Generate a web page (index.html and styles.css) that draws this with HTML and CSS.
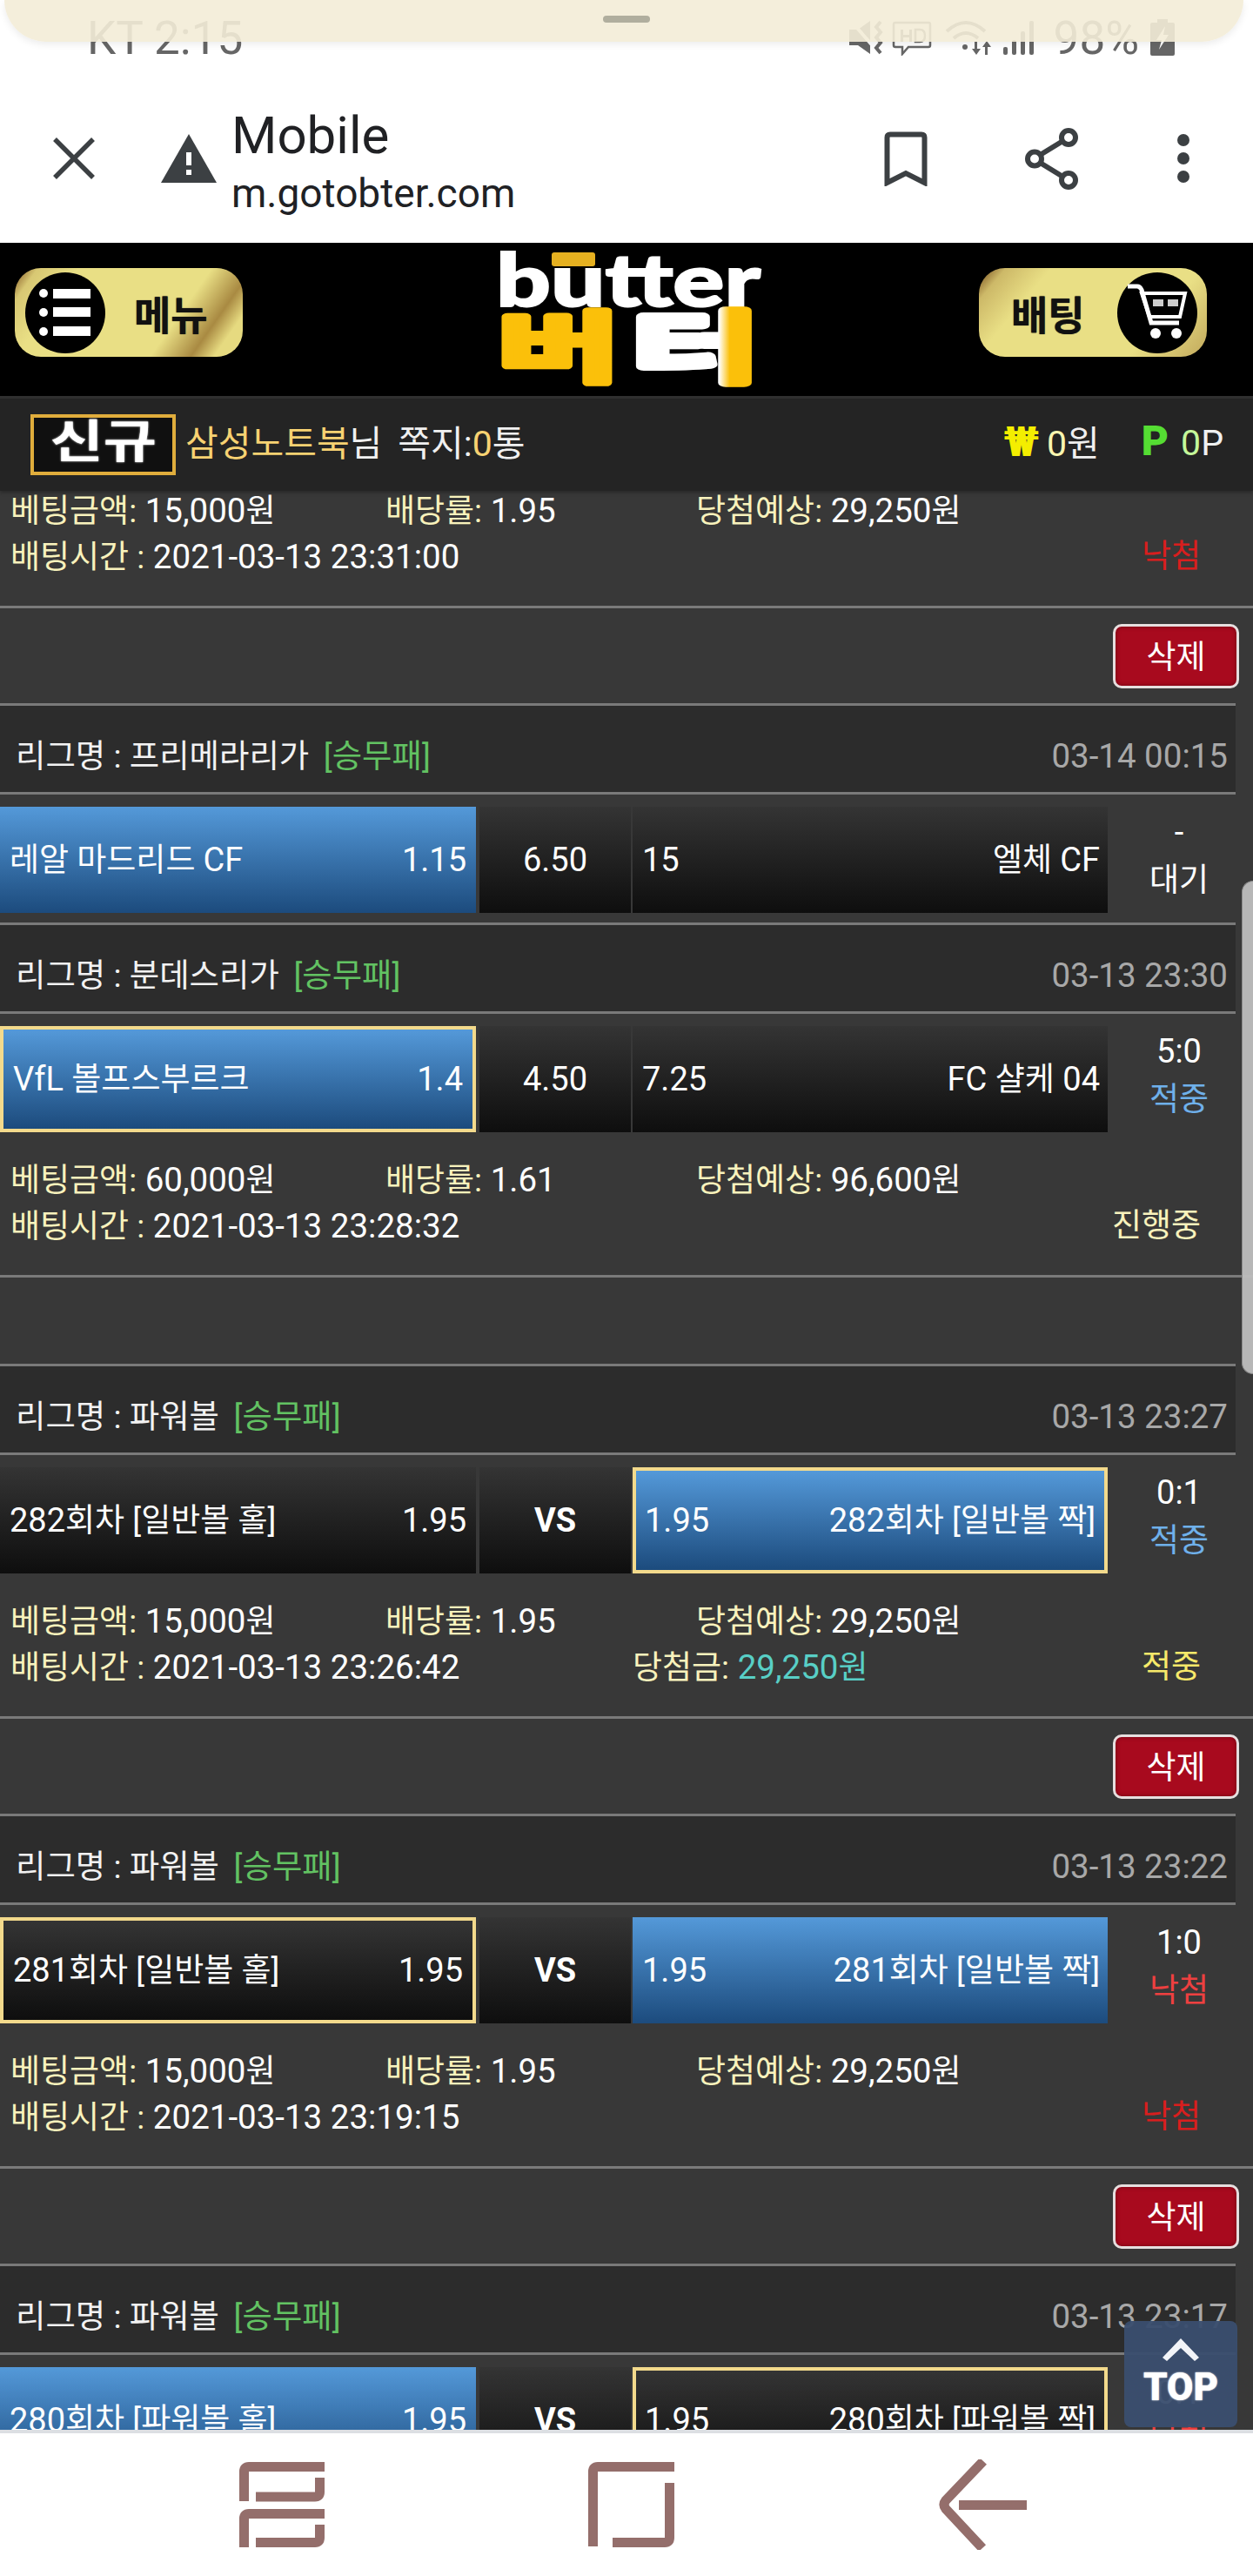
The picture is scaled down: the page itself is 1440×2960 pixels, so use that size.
FILE: index.html
```html
<!DOCTYPE html>
<html lang="ko">
<head>
<meta charset="utf-8">
<title>Mobile</title>
<link rel="stylesheet" href="styles.css">
</head>
<body>
<div class="app">
  <div class="chrome">
    <div class="status">
      <span class="clock">KT 2:15</span>
      <svg class="status-icons" width="212" height="42" viewBox="0 0 212 42" fill="#666">
        <path d="M0 12h10L24 2v38L10 30H0z"/><path d="M2 2l26 30" stroke="#fff" stroke-width="4"/>
        <path d="M36 3l-5 6 5 6-5 6 5 6-5 6 5 6" fill="none" stroke="#666" stroke-width="4"/>
        <path d="M53 4h38q2 0 2 2v24q0 2-2 2H68l-7 8v-8h-8q-2 0-2-2V6q0-2 2-2z" fill="none" stroke="#666" stroke-width="2.5"/>
        <rect x="59" y="12" width="3" height="14"/><rect x="69" y="12" width="3" height="14"/><rect x="60" y="18" width="10" height="3"/>
        <path d="M76 12h5q6 0 6 7t-6 7h-5z" fill="none" stroke="#666" stroke-width="2.5"/>
        <path d="M112 14q22-20 44 0M120 22q14-12 28 0" fill="none" stroke="#666" stroke-width="4"/>
        <circle cx="133" cy="32" r="3"/><path d="M144 26h3v8h4l-5 7-5-7h3zM156 41h3v-9h4l-5-7-5 7h3z"/>
        <rect x="177" y="32" width="5" height="9" rx="2"/><rect x="187" y="24" width="5" height="17" rx="2"/><rect x="197" y="14" width="5" height="27" rx="2"/><rect x="207" y="2" width="5" height="39" rx="2"/>
      </svg>
      <span class="pct">98%</span>
      <svg class="battery" width="28" height="42" viewBox="0 0 28 42"><path d="M8 0h12v4h6q2 0 2 2v34q0 2-2 2H2q-2 0-2-2V6q0-2 2-2h6z" fill="#666"/><path d="M17 8L7 24h6l-3 11 11-17h-6z" fill="#fff"/></svg>
    </div>
    <div class="toolbar">
      <svg class="ic-close" width="50" height="50" viewBox="0 0 50 50"><path d="M3 3l44 44M47 3L3 47" stroke="#3c4043" stroke-width="5.5" fill="none"/></svg>
      <svg class="ic-warn" width="64" height="56" viewBox="0 0 64 56"><path d="M32 0l32 56H0z" fill="#3c4043"/><rect x="29" y="21" width="6" height="15" fill="#fff"/><rect x="29" y="41" width="6" height="6" fill="#fff"/></svg>
      <div class="title">
        <div class="title-main">Mobile</div>
        <div class="title-url">m.gotobter.com</div>
      </div>
      <svg class="ic-book" width="50" height="63" viewBox="0 0 50 63"><path d="M3.500 59V7q0-3.500 3.500-3.500h36q3.500 0 3.500 3.500v52L25 48z" fill="none" stroke="#3c4043" stroke-width="6"/></svg>
      <svg class="ic-share" width="62" height="71" viewBox="0 0 62 71"><path d="M10 35.500L50 11M10 35.500L50 60" stroke="#3c4043" stroke-width="6" fill="none"/><circle cx="11" cy="35.500" r="8" fill="#fff" stroke="#3c4043" stroke-width="6"/><circle cx="50" cy="11" r="8" fill="#fff" stroke="#3c4043" stroke-width="6"/><circle cx="50" cy="60" r="8" fill="#fff" stroke="#3c4043" stroke-width="6"/></svg>
      <div class="ic-dots"><i></i><i></i><i></i></div>
    </div>
  </div>

  <header class="site-head">
    <div class="gold-btn gold-left">
      <div class="disc">
        <svg width="62" height="62" viewBox="0 0 62 62" fill="#fff"><circle cx="6" cy="9" r="5"/><circle cx="6" cy="31" r="5"/><circle cx="6" cy="53" r="5"/><rect x="17" y="4" width="43" height="11"/><rect x="17" y="25" width="43" height="11"/><rect x="17" y="47" width="43" height="11"/></svg>
      </div>
      <span class="gold-label">메뉴</span>
    </div>
    <svg class="logo" width="306" height="156" viewBox="0 0 306 156">
      <defs><linearGradient id="ter" gradientUnits="userSpaceOnUse" x1="154" x2="306" y1="0" y2="0"><stop offset="0.68" stop-color="#fff"/><stop offset="0.76" stop-color="#fbc00a"/></linearGradient></defs>
      <text class="logo-en" x="1" y="62" textLength="304" lengthAdjust="spacingAndGlyphs">butter</text>
      <rect x="65" y="0" width="50" height="16" rx="3" fill="#e5b020"/>
      <text class="logo-ko logo-beo" x="3" y="141" textLength="140" lengthAdjust="spacingAndGlyphs">버</text>
      <text class="logo-ko logo-teo" x="158" y="141" textLength="144" lengthAdjust="spacingAndGlyphs">터</text>
    </svg>
    <div class="gold-btn gold-right">
      <span class="gold-label">배팅</span>
      <div class="disc">
        <svg width="70" height="66" viewBox="0 0 70 66" fill="none" stroke="#fff"><path d="M1 3h11q3 0 5 4l11 38h32" stroke-width="5"/><path d="M17 11h50l-6 27H26z" stroke-width="4"/><rect x="30" y="18" width="12" height="8" fill="#ccc" stroke="none"/><rect x="47" y="18" width="12" height="8" fill="#ccc" stroke="none"/><circle cx="33" cy="57" r="6" fill="#fff" stroke="none"/><circle cx="57" cy="57" r="6" fill="#fff" stroke="none"/></svg>
      </div>
    </div>
  </header>

  <div class="user-bar">
    <span class="badge"><span class="badge-text">신규</span></span>
    <span class="u-name">삼성노트북</span><span class="u-text">님</span>
    <span class="u-msg">쪽지:<b class="u-gold">0</b>통</span>
    <span class="u-won"><b class="won-sign">₩</b><b class="u-cream">0</b>원</span>
    <span class="u-pt"><b class="pt-sign">P</b><b class="u-lime">0</b>P</span>
  </div>

  <main class="content">
    <div class="scroller">
      <section class="info">
        <div class="info-row"><span class="c-a"><span class="lbl k">베팅금액:</span> 15,000<span class="k">원</span></span><span class="c-b"><span class="lbl k">배당률:</span> 1.95</span><span><span class="lbl k">당첨예상:</span> 29,250<span class="k">원</span></span></div>
        <div class="info-row"><span class="c-wide"><span class="lbl k">배팅시간 :</span> 2021-03-13 23:31:00</span><span class="result k lost">낙첨</span></div>
      </section>
      <div class="hr full"></div>
      <div class="del-row"><span class="del k">삭제</span></div>
      <div class="hr"></div>

      <div class="league"><span><span class="k">리그명 : 프리메라리가</span> <span class="tag k">[승무패]</span></span><span class="date">03-14 00:15</span></div>
      <div class="hr"></div>
      <div class="match">
        <div class="cell side l blue"><span class="k">레알 마드리드 <span class="en">CF</span></span><span>1.15</span></div>
        <div class="cell mid">6.50</div>
        <div class="cell side r"><span>15</span><span class="k">엘체 <span class="en">CF</span></span></div>
        <div class="state"><div>-</div><div class="k">대기</div></div>
      </div>
      <div class="hr"></div>

      <div class="league"><span><span class="k">리그명 : 분데스리가</span> <span class="tag k">[승무패]</span></span><span class="date">03-13 23:30</span></div>
      <div class="hr"></div>
      <div class="match">
        <div class="cell side l blue sel"><span>VfL <span class="k">볼프스부르크</span></span><span>1.4</span></div>
        <div class="cell mid">4.50</div>
        <div class="cell side r"><span>7.25</span><span>FC <span class="k">샬케</span> 04</span></div>
        <div class="state"><div>5:0</div><div class="k hit">적중</div></div>
      </div>
      <section class="info">
        <div class="info-row"><span class="c-a"><span class="lbl k">베팅금액:</span> 60,000<span class="k">원</span></span><span class="c-b"><span class="lbl k">배당률:</span> 1.61</span><span><span class="lbl k">당첨예상:</span> 96,600<span class="k">원</span></span></div>
        <div class="info-row"><span class="c-wide"><span class="lbl k">배팅시간 :</span> 2021-03-13 23:28:32</span><span class="result k lbl">진행중</span></div>
      </section>
      <div class="hr full"></div>
      <div class="empty-row"></div>
      <div class="hr"></div>

      <div class="league"><span><span class="k">리그명 : 파워볼</span> <span class="tag k">[승무패]</span></span><span class="date">03-13 23:27</span></div>
      <div class="hr"></div>
      <div class="match">
        <div class="cell side l"><span>282<span class="k">회차 [일반볼 홀]</span></span><span>1.95</span></div>
        <div class="cell mid vs">VS</div>
        <div class="cell side r blue sel"><span>1.95</span><span>282<span class="k">회차 [일반볼 짝]</span></span></div>
        <div class="state"><div>0:1</div><div class="k hit">적중</div></div>
      </div>
      <section class="info">
        <div class="info-row"><span class="c-a"><span class="lbl k">베팅금액:</span> 15,000<span class="k">원</span></span><span class="c-b"><span class="lbl k">배당률:</span> 1.95</span><span><span class="lbl k">당첨예상:</span> 29,250<span class="k">원</span></span></div>
        <div class="info-row"><span class="c-wide"><span class="lbl k">배팅시간 :</span> 2021-03-13 23:26:42</span><span><span class="lbl k">당첨금:</span> <span class="won-val">29,250<span class="k">원</span></span></span><span class="result k win">적중</span></div>
      </section>
      <div class="hr full"></div>
      <div class="del-row"><span class="del k">삭제</span></div>
      <div class="hr"></div>

      <div class="league"><span><span class="k">리그명 : 파워볼</span> <span class="tag k">[승무패]</span></span><span class="date">03-13 23:22</span></div>
      <div class="hr"></div>
      <div class="match">
        <div class="cell side l sel"><span>281<span class="k">회차 [일반볼 홀]</span></span><span>1.95</span></div>
        <div class="cell mid vs">VS</div>
        <div class="cell side r blue"><span>1.95</span><span>281<span class="k">회차 [일반볼 짝]</span></span></div>
        <div class="state"><div>1:0</div><div class="k lost-soft">낙첨</div></div>
      </div>
      <section class="info">
        <div class="info-row"><span class="c-a"><span class="lbl k">베팅금액:</span> 15,000<span class="k">원</span></span><span class="c-b"><span class="lbl k">배당률:</span> 1.95</span><span><span class="lbl k">당첨예상:</span> 29,250<span class="k">원</span></span></div>
        <div class="info-row"><span class="c-wide"><span class="lbl k">배팅시간 :</span> 2021-03-13 23:19:15</span><span class="result k lost">낙첨</span></div>
      </section>
      <div class="hr full"></div>
      <div class="del-row"><span class="del k">삭제</span></div>
      <div class="hr"></div>

      <div class="league"><span><span class="k">리그명 : 파워볼</span> <span class="tag k">[승무패]</span></span><span class="date">03-13 23:17</span></div>
      <div class="hr"></div>
      <div class="match">
        <div class="cell side l blue"><span>280<span class="k">회차 [파워볼 홀]</span></span><span>1.95</span></div>
        <div class="cell mid vs">VS</div>
        <div class="cell side r sel"><span>1.95</span><span>280<span class="k">회차 [파워볼 짝]</span></span></div>
        <div class="state"><div>0:1</div><div class="k lost-soft">낙첨</div></div>
      </div>
    </div>
  </main>

  <nav class="navbar">
    <svg width="98" height="98" viewBox="0 0 98 98" fill="none" stroke="#946e6b" stroke-width="11"><path d="M98 5.500H11q-5.500 0-5.500 5.500V45"/><path d="M19 40h68q5.500 0 5.500-5.500V18"/><path d="M98 59.500H11q-5.500 0-5.500 5.500V98"/><path d="M19 92.500h68q5.500 0 5.500-5.500V72"/></svg>
    <svg width="99" height="98" viewBox="0 0 99 98" fill="none" stroke="#946e6b" stroke-width="11"><path d="M99 5.500H11q-5.500 0-5.500 5.500V97"/><path d="M28 92.500h60q5.500 0 5.500-5.500V24"/></svg>
    <svg width="102" height="104" viewBox="0 0 102 104" fill="none" stroke="#946e6b" stroke-width="11"><path d="M52 2L9 47q-4 5 0 10l42 45" stroke-linejoin="round"/><path d="M24 52.500h78"/></svg>
  </nav>

  <div class="notif"><span class="notif-handle"></span></div>
  <div class="scrollthumb"></div>
  <div class="to-top">
    <svg width="42" height="26" viewBox="0 0 42 26"><path d="M21 0l21 22-5 4-16-15L5 26l-5-4z" fill="#f2f4f8"/></svg>
    <span class="to-top-label">TOP</span>
  </div>
</div>
</body>
</html>
```
FILE: styles.css
```css
* { box-sizing: border-box; }
html, body { margin: 0; padding: 0; background: #fff; }
body { font-family: Roboto, "Noto Sans CJK KR", sans-serif; }

.app {
  position: relative;
  width: 1440px;
  height: 2960px;
  display: flex;
  flex-direction: column;
  overflow: hidden;
}

/* browser chrome */
.chrome { height: 279px; flex: none; background: #fff; color: #202124; }
.status {
  height: 85px;
  display: flex;
  align-items: flex-start;
  padding: 16px 90px 0 100px;
  color: #666;
  font-size: 53px;
  line-height: 56px;
}
.clock { margin-right: auto; }
.status-icons { margin-top: 6px; margin-right: 23px; }
.pct { margin-right: 13px; }
.battery { margin-top: 6px; }

.toolbar { height: 194px; display: flex; align-items: center; padding-left: 60px; }
.ic-close { margin-right: 75px; }
.ic-warn { margin-right: 17px; }
.title { margin-top: 14px; }
.title-main { font-size: 60px; line-height: 67px; }
.title-url { font-size: 46px; line-height: 67px; }
.ic-book { margin-left: auto; }
.ic-share { margin-left: 112px; }
.ic-dots { margin-left: 113px; margin-right: 73px; display: flex; flex-direction: column; gap: 7px; }
.ic-dots i { display: block; width: 14px; height: 14px; border-radius: 50%; background: #3c4043; }

/* site header */
.site-head {
  height: 176px;
  flex: none;
  background: #000;
  display: flex;
  align-items: flex-start;
  justify-content: space-between;
  padding: 29px 53px 0 17px;
}
.logo { margin-top: -18px; margin-left: 39px; overflow: visible; }
.logo-en { font-family: Lato, sans-serif; font-weight: 900; font-size: 84px; fill: #fff; stroke: #fff; stroke-width: 2px; }
.logo-ko { font-family: "Noto Sans CJK KR", sans-serif; font-weight: 700; font-size: 88px; stroke-linejoin: round; }
.logo-beo { fill: #fbc00a; stroke: #fbc00a; stroke-width: 8px; }
.logo-teo { fill: url(#ter); stroke: url(#ter); stroke-width: 10px; }

.gold-btn {
  width: 262px;
  height: 102px;
  border-radius: 30px;
  display: flex;
  align-items: center;
  color: #111;
}
.gold-left {
  padding-left: 12px;
  background: linear-gradient(125deg, #7a4c1c 0%, #d8c873 8%, #e9df85 22%, #e9df85 68%, #a98a42 82%, #e6da80 90%);
}
.gold-right {
  padding-left: 37px;
  background: linear-gradient(130deg, #6f4618 0%, #cdb968 9%, #e9df85 24%, #e9df85 74%, #c2a95c 100%);
}
.disc {
  width: 92px;
  height: 93px;
  border-radius: 50%;
  background: #000;
  display: flex;
  align-items: center;
  justify-content: center;
}
.gold-label {
  font-family: "Noto Sans CJK KR", sans-serif;
  font-weight: 700;
  font-size: 46px;
  line-height: 60px;
  text-shadow: 0 0 1px #111;
}
.gold-left .gold-label { margin-left: 33px; }
.gold-right .gold-label { margin-right: 37px; }

/* member bar */
.user-bar {
  height: 109px;
  flex: none;
  background: #242424;
  border-top: 3px solid #2f2f2f;
  display: flex;
  align-items: center;
  padding: 0 34px 10px 35px;
  color: #f0f0f0;
  font-size: 41px;
  position: relative;
  z-index: 1;
  box-shadow: 0 2px 4px rgba(0, 0, 0, .3);
}
.user-bar span, .user-bar b { font-weight: 400; }
.user-bar .badge {
  width: 167px;
  height: 70px;
  margin: 10px 11px 0 0;
  border: 4px solid #e0ad3c;
  background: #101010;
  color: #fff;
  font-size: 52px;
  line-height: 58px;
  text-align: center;
}
.user-bar .badge-text {
  display: inline-block;
  font-weight: 700;
  transform: scaleX(1.28);
  text-shadow: 0 0 2px #fff;
}
.u-name { color: #f7d272; }
.u-msg { margin-left: 18px; }
.u-gold { color: #f7d272; }
.u-won { margin-left: auto; }
.user-bar .won-sign { font-weight: 900; color: #f4ee00; font-size: 48px; margin-right: 9px; }
.u-cream { color: #fbf6b0; }
.u-pt { margin-left: 48px; }
.user-bar .pt-sign { font-weight: 900; color: #55dd33; font-size: 48px; margin-right: 14px; }
.u-lime { color: #c4f79a; }

/* list */
.content { flex: 1; min-height: 0; overflow: hidden; background: #383838; color: #fff; font-size: 38px; }
.scroller { margin-top: -32px; }
.k { font-size: 37px; font-weight: 400; }
.k .en { font-size: 38px; }

.hr { height: 3px; width: 1420px; background: #7a7a7a; }
.hr.full { width: 100%; }

.info { height: 164px; padding: 28px 0 0 12px; font-size: 38.5px; }
.info-row { display: flex; height: 53px; line-height: 53px; white-space: nowrap; }
.c-a { width: 431px; }
.c-b { width: 357px; }
.c-wide { width: 715px; }
.lbl { color: #f8f2bc; }
.result { margin-left: auto; padding-right: 60px; }
.lost { color: #d81e1e; }
.win { color: #f7e96a; }
.won-val, .won-val .k { color: #58cfc6; }

.del-row { height: 109px; display: flex; align-items: center; justify-content: flex-end; padding-right: 16px; }
.del {
  width: 145px;
  height: 74px;
  border: 3px solid #e6dfdf;
  border-radius: 10px;
  background: #a80a1e;
  box-shadow: inset 0 0 5px #6e0512;
  color: #fff;
  text-align: center;
  line-height: 72px;
}
.empty-row { height: 99px; }

.league {
  width: 1420px;
  height: 99px;
  background: #2c2c2c;
  display: flex;
  justify-content: space-between;
  align-items: center;
  padding: 16px 9px 0 18px;
  color: #f2f2f2;
  font-size: 38.5px;
  line-height: 44px;
  white-space: nowrap;
}
.league .k { font-size: 37.4px; }
.tag { color: #62c262; margin-left: 7px; }
.date { color: #a8a8a8; }

.match { display: flex; height: 122px; margin-top: 14px; }
.match + .hr { margin-top: 11px; }
.cell {
  display: flex;
  align-items: center;
  justify-content: space-between;
  background: linear-gradient(#343434, #0e0e0e);
  line-height: 44px;
  white-space: nowrap;
}
.side { padding: 0 9px 0 11px; }
.side.l { width: 547px; padding-right: 11px; }
.side.r { width: 546px; margin-left: 2px; }
.mid { width: 174px; margin-left: 4px; justify-content: center; }
.vs { font-weight: 700; }
.blue { background: linear-gradient(#5499d9, #1c4b7d); }
.sel { border: 4px solid #f3da8c; }
.side.r.sel { padding: 0 10px; }
.state { width: 164px; padding-top: 1px; text-align: center; line-height: 56px; }
.hit { color: #6fb0ea; }
.lost-soft { color: #ee4040; }

/* bottom nav */
.navbar {
  height: 168px;
  flex: none;
  position: relative;
  z-index: 3;
  background: #fff;
  border-top: 4px solid #dcdfe3;
  display: flex;
  align-items: center;
  padding: 0 260px 0 275px;
  justify-content: space-between;
}

/* overlays */
.notif {
  position: absolute;
  top: 0;
  left: 5px;
  width: 1424px;
  height: 48px;
  background: rgba(243, 236, 215, .9);
  border-radius: 0 0 58px 58px;
  box-shadow: 0 3px 8px rgba(0, 0, 0, .08);
  display: flex;
  justify-content: center;
  padding-top: 18px;
  z-index: 5;
}
.notif-handle { width: 54px; height: 8px; border-radius: 4px; background: #b0ae9e; margin-left: 6px; }

.scrollthumb {
  position: absolute;
  top: 1012px;
  right: 0;
  width: 13px;
  height: 567px;
  border: 1px solid #8a8a8a;
  border-right: 0;
  border-radius: 16px 0 0 16px;
  background: rgba(190, 190, 190, .95);
  z-index: 2;
}
.to-top {
  position: absolute;
  right: 18px;
  bottom: 171px;
  width: 130px;
  height: 122px;
  background: rgba(58, 78, 110, .96);
  border-radius: 8px;
  display: flex;
  flex-direction: column;
  align-items: center;
  padding-top: 20px;
  z-index: 2;
}
.to-top-label { font-weight: 900; font-size: 44px; line-height: 44px; margin-top: 8px; color: #fff; text-shadow: 0 0 2px #fff; }
```
